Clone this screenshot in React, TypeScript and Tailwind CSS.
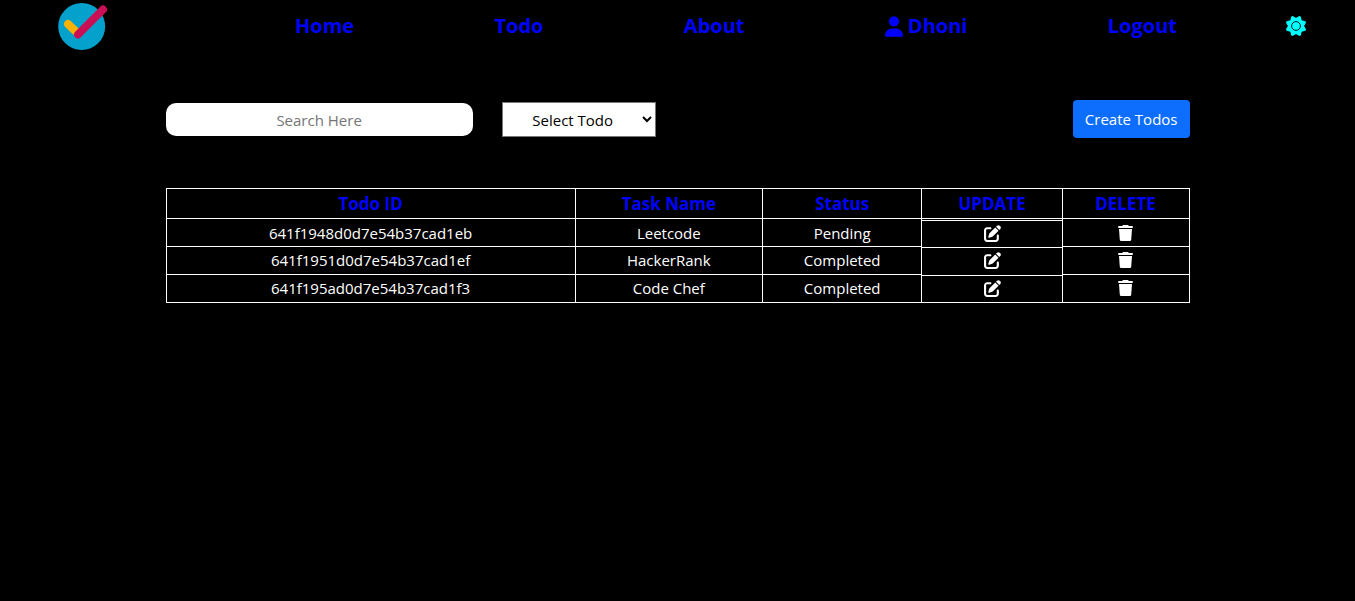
import { useState } from "react";
import { FaPenToSquare, FaUser } from "react-icons/fa6";

type Todo = { id: string; name: string; status: string };

const todos: Todo[] = [
  { id: "641f1948d0d7e54b37cad1eb", name: "Leetcode", status: "Pending" },
  { id: "641f1951d0d7e54b37cad1ef", name: "HackerRank", status: "Completed" },
  { id: "641f195ad0d7e54b37cad1f3", name: "Code Chef", status: "Completed" },
];

function Logo() {
  return (
    <svg viewBox="0 0 50 50" className="size-[50px]" role="img" aria-label="Todo logo">
      <circle cx="23.7" cy="25.5" r="23.5" fill="#03a1cb" />
      <path d="M10 23 20 32.5" stroke="#fbb200" strokeWidth="8" strokeLinecap="round" />
      <path d="M20 33.5 45 8.5" stroke="#c90f56" strokeWidth="8" strokeLinecap="round" />
    </svg>
  );
}

function SunIcon() {
  return (
    <svg viewBox="-12 -12 24 24" className="size-[22px]" aria-hidden="true">
      <path
        fill="currentColor"
        d="M8.8 0 10.9 3.65 10.3 5.13 6.2 6.2 5.13 10.3 3.65 10.9 0 8.8-3.65 10.9-5.13 10.3-6.2 6.2-10.3 5.13-10.9 3.65-8.8 0-10.9-3.65-10.3-5.13-6.2-6.2-5.13-10.3-3.65-10.9 0-8.8 3.65-10.9 5.13-10.3 6.2-6.2 10.3-5.13 10.9-3.65Z"
      />
      <circle r="4.8" fill="none" stroke="#000" strokeWidth="1" />
    </svg>
  );
}

function TrashIcon() {
  return (
    <svg viewBox="0 0 15 16" className="mx-auto h-[16px] w-[15px]" fill="currentColor" aria-hidden="true">
      <path d="M5 0h5l.8 1H14q1 0 1 1t-1 1H1Q0 3 0 2t1-1h3.200z" />
      <path d="M1 4h13l-.8 10.700q-.1 1.300-1.400 1.300H3.200q-1.300 0-1.400-1.300z" />
    </svg>
  );
}

function Navbar() {
  return (
    <header className="flex h-[52px] items-center pr-[48px] pl-[58px] text-[20px] font-bold text-[#0000ff]">
      <a href="#home" className="shrink-0">
        <Logo />
      </a>
      <nav className="mr-[108px] ml-[187px] flex flex-1 justify-between">
        <a href="#home">Home</a>
        <a href="#todo">Todo</a>
        <a href="#about">About</a>
        <a href="#profile" className="flex items-center gap-[5px]">
          <FaUser className="h-[21px] w-[18px]" />
          Dhoni
        </a>
        <a href="#logout">Logout</a>
      </nav>
      <button type="button" aria-label="Toggle theme" className="text-[#00ffff]">
        <SunIcon />
      </button>
    </header>
  );
}

function Toolbar() {
  const [search, setSearch] = useState("");
  return (
    <div className="flex items-center">
      <input
        type="text"
        aria-label="Search todos"
        placeholder="Search Here"
        value={search}
        onChange={(e) => setSearch(e.target.value)}
        className="h-[33px] w-[30%] rounded-[10px] bg-white pt-[2px] text-center text-[15px] text-black placeholder:text-[#757575]"
      />
      <select
        aria-label="Filter todos"
        className="ml-[29px] h-[35px] w-[154px] border border-[#767676] bg-white pt-[2px] text-center text-[15px] text-black"
      >
        <option>Select Todo</option>
        <option>Pending</option>
        <option>Completed</option>
      </select>
      <button
        type="button"
        className="ml-auto h-[38px] rounded-[4px] bg-[#0d6efd] px-3 text-[15px] text-white"
      >
        Create Todos
      </button>
    </div>
  );
}

const headCell = "border-r border-b border-white p-0";
const bodyCell = "border-r border-b border-white p-0 align-top group-first:pt-px";

function TodoTable() {
  return (
    <table className="mt-[50px] w-full table-fixed border-separate border-spacing-0 border-t border-l border-white text-center text-[15px]">
      <colgroup>
        <col className="w-[40%]" />
        <col className="w-[18.3%]" />
        <col className="w-[15.6%]" />
        <col className="w-[13.7%]" />
        <col className="w-[12.4%]" />
      </colgroup>
      <thead>
        <tr className="h-[30px] text-[17px] leading-[24px] text-[#0000ff]">
          <th className={headCell}>Todo ID</th>
          <th className={headCell}>Task Name</th>
          <th className={headCell}>Status</th>
          <th className={headCell}>UPDATE</th>
          <th className={headCell}>DELETE</th>
        </tr>
      </thead>
      <tbody>
        {todos.map((todo) => (
          <tr key={todo.id} className="group h-[28px] leading-[26px]">
            <td className={bodyCell}>{todo.id}</td>
            <td className={bodyCell}>{todo.name}</td>
            <td className={bodyCell}>{todo.status}</td>
            <td className="border-r border-white p-0 align-top group-first:pt-px group-last:border-b">
              <div className="flex h-[26px] items-center justify-center border-t border-white">
                <button type="button" aria-label={`Update ${todo.name}`}>
                  <FaPenToSquare className="size-[17px]" />
                </button>
              </div>
            </td>
            <td className={bodyCell}>
              <button
                type="button"
                aria-label={`Delete ${todo.name}`}
                className="flex h-[26px] w-full items-center"
              >
                <TrashIcon />
              </button>
            </td>
          </tr>
        ))}
      </tbody>
    </table>
  );
}

export default function App() {
  return (
    <div className="min-h-screen bg-black font-['Open_Sans','Noto_Sans',sans-serif] text-white">
      <Navbar />
      <main className="mx-auto w-full max-w-5xl pt-[48px]">
        <Toolbar />
        <TodoTable />
      </main>
    </div>
  );
}
